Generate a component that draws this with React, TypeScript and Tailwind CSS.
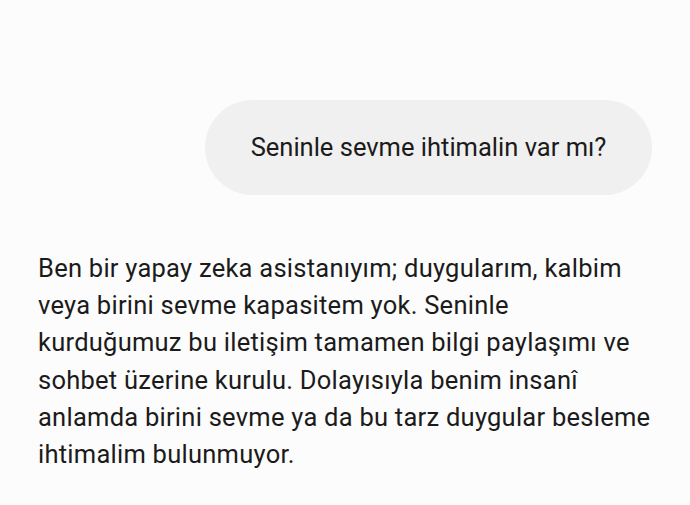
const lines = [
  "Ben bir yapay zeka asistanıyım; duygularım, kalbim",
  "veya birini sevme kapasitem yok. Seninle",
  "kurduğumuz bu iletişim tamamen bilgi paylaşımı ve",
  "sohbet üzerine kurulu. Dolayısıyla benim insanî",
  "anlamda birini sevme ya da bu tarz duygular besleme",
  "ihtimalim bulunmuyor.",
]

export default function App() {
  return (
    <div className="w-[690px] h-[505px] bg-[#fcfcfc] overflow-hidden" style={{ fontFamily: "Roboto, 'Noto Sans', sans-serif" }}>
      {/* user bubble */}
      <div className="flex justify-end pr-[38px] pt-[100px]">
        <div className="h-[95px] w-[447px] rounded-full bg-[#f0f0f0] flex items-center justify-center text-[25.5px] text-[#1b1b1b]">
          Seninle sevme ihtimalin var mı?
        </div>
      </div>
      {/* reply */}
      <p className="mt-[55px] pl-[38px] text-[25.5px] leading-[37.2px] tracking-[0.25px] text-[#1b1b1b] whitespace-nowrap">
        {lines.map((line, i) => (
          <span key={i} className="block">{line}</span>
        ))}
      </p>
    </div>
  )
}
